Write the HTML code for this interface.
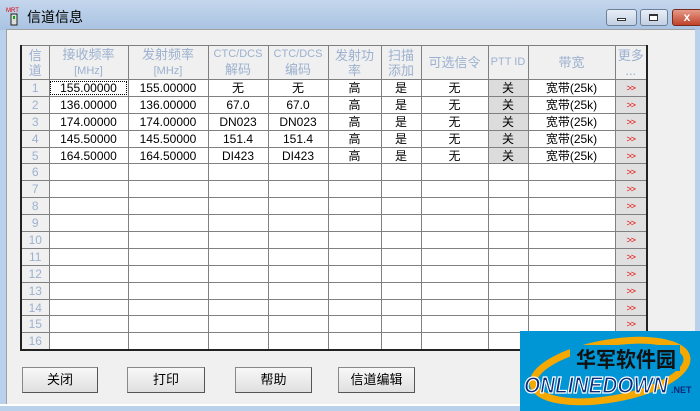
<!DOCTYPE html><html><head><meta charset="utf-8"><style>
*{margin:0;padding:0;box-sizing:border-box}
body{width:700px;height:411px;overflow:hidden;background:#b9d1ea;font-family:"Liberation Sans","Noto Sans CJK SC",sans-serif;position:relative}
.title{position:absolute;left:0;top:0;width:700px;height:30px;background:linear-gradient(#c4d6ec,#a9c3e2)}
.title span{position:absolute;left:27px;top:7px;font-size:14px;color:#000}
.panel{position:absolute;left:6px;top:29px;width:689px;height:375px;background:#f0f0f0;border-top:1px solid #a0a0a0;border-left:1px solid #a0a0a0}
.bottom{position:absolute;left:0;top:404px;width:700px;height:7px;background:#b9d1ea;border-top:2px solid #fff}
.wb{position:absolute;top:9px;height:17px;border:1px solid #6b7f99;border-radius:3px;background:linear-gradient(#e8eef7,#c2d0e3)}
table{position:absolute;left:20px;top:45px;border-collapse:collapse;table-layout:fixed;border:2px solid #222;border-top:1px solid #888;background:#fff}
td{border:1px solid #808080;height:16.9px;font-size:12px;text-align:center;line-height:14px;padding:0;white-space:nowrap;overflow:hidden}
tr.h td{height:34px;background:#f0f0f0;color:#9cb1cf;font-size:13px;line-height:15px}
td.n{background:#f0f0f0;color:#9cb1cf}
td.p{background:#dcdcdc}
td.m{background:#e0e0e0;color:#e00;font-size:9px;letter-spacing:-1px}
.btn{position:absolute;top:367px;height:26px;border:1px solid #888;border-right-color:#555;border-bottom-color:#555;background:linear-gradient(#f8f8f8,#e0e0e0);font-size:13px;text-align:center;line-height:24px}
.logo{position:absolute;left:520px;top:331px;width:180px;height:80px;background:#0096d6;overflow:hidden}
</style></head><body>
<div class="title"><svg style="position:absolute;left:6px;top:6px" width="16" height="20"><text x="0" y="6" font-size="6" fill="#d00" font-family="Liberation Sans">MRT</text><rect x="5" y="8" width="6" height="11" fill="#ddd" stroke="#222"/><rect x="7" y="10" width="2" height="3" fill="#0a0"/></svg><span>信道信息</span>
<div class="wb" style="left:606px;width:31px"><div style="position:absolute;left:10px;top:8px;width:9px;height:3px;border:1px solid #333;background:#fff"></div></div>
<div class="wb" style="left:640px;width:28px"><div style="position:absolute;left:8px;top:4px;width:9px;height:7px;border:1px solid #333;border-top-width:2px;background:#fff"></div></div>
<div class="wb" style="left:672px;width:30px;background:linear-gradient(#e79a8a,#c0432a);border-color:#7a2a1a;color:#fff;font-weight:bold;font-size:12px;text-align:center;line-height:15px">x</div>
</div>
<div class="panel"></div>
<table>
<colgroup><col style="width:28px"><col style="width:79px"><col style="width:80px"><col style="width:60px"><col style="width:60px"><col style="width:53px"><col style="width:40px"><col style="width:67px"><col style="width:40px"><col style="width:87px"><col style="width:32px"></colgroup>
<tr class="h"><td>信<br>道</td><td>接收频率<br><small style="font-size:11px">[MHz]</small></td><td>发射频率<br><small style="font-size:11px">[MHz]</small></td><td style="font-size:11px">CTC/DCS<br><span style="font-size:13px">解码</span></td><td style="font-size:11px">CTC/DCS<br><span style="font-size:13px">编码</span></td><td>发射功<br>率</td><td>扫描<br>添加</td><td>可选信令</td><td style="font-size:11px">PTT ID</td><td>带宽</td><td>更多<br>...</td></tr>
<tr><td class="n">1</td><td style="outline:1px dotted #000;outline-offset:-2px">155.00000</td><td>155.00000</td><td>无</td><td>无</td><td>高</td><td>是</td><td>无</td><td class="p">关</td><td>宽带(25k)</td><td class="m">&gt;&gt;</td></tr>
<tr><td class="n">2</td><td>136.00000</td><td>136.00000</td><td>67.0</td><td>67.0</td><td>高</td><td>是</td><td>无</td><td class="p">关</td><td>宽带(25k)</td><td class="m">&gt;&gt;</td></tr>
<tr><td class="n">3</td><td>174.00000</td><td>174.00000</td><td>DN023</td><td>DN023</td><td>高</td><td>是</td><td>无</td><td class="p">关</td><td>宽带(25k)</td><td class="m">&gt;&gt;</td></tr>
<tr><td class="n">4</td><td>145.50000</td><td>145.50000</td><td>151.4</td><td>151.4</td><td>高</td><td>是</td><td>无</td><td class="p">关</td><td>宽带(25k)</td><td class="m">&gt;&gt;</td></tr>
<tr><td class="n">5</td><td>164.50000</td><td>164.50000</td><td>DI423</td><td>DI423</td><td>高</td><td>是</td><td>无</td><td class="p">关</td><td>宽带(25k)</td><td class="m">&gt;&gt;</td></tr>
<tr><td class="n">6</td><td></td><td></td><td></td><td></td><td></td><td></td><td></td><td></td><td></td><td class="m">&gt;&gt;</td></tr>
<tr><td class="n">7</td><td></td><td></td><td></td><td></td><td></td><td></td><td></td><td></td><td></td><td class="m">&gt;&gt;</td></tr>
<tr><td class="n">8</td><td></td><td></td><td></td><td></td><td></td><td></td><td></td><td></td><td></td><td class="m">&gt;&gt;</td></tr>
<tr><td class="n">9</td><td></td><td></td><td></td><td></td><td></td><td></td><td></td><td></td><td></td><td class="m">&gt;&gt;</td></tr>
<tr><td class="n">10</td><td></td><td></td><td></td><td></td><td></td><td></td><td></td><td></td><td></td><td class="m">&gt;&gt;</td></tr>
<tr><td class="n">11</td><td></td><td></td><td></td><td></td><td></td><td></td><td></td><td></td><td></td><td class="m">&gt;&gt;</td></tr>
<tr><td class="n">12</td><td></td><td></td><td></td><td></td><td></td><td></td><td></td><td></td><td></td><td class="m">&gt;&gt;</td></tr>
<tr><td class="n">13</td><td></td><td></td><td></td><td></td><td></td><td></td><td></td><td></td><td></td><td class="m">&gt;&gt;</td></tr>
<tr><td class="n">14</td><td></td><td></td><td></td><td></td><td></td><td></td><td></td><td></td><td></td><td class="m">&gt;&gt;</td></tr>
<tr><td class="n">15</td><td></td><td></td><td></td><td></td><td></td><td></td><td></td><td></td><td></td><td class="m">&gt;&gt;</td></tr>
<tr><td class="n">16</td><td></td><td></td><td></td><td></td><td></td><td></td><td></td><td></td><td></td><td class="m">&gt;&gt;</td></tr>
</table>
<div class="btn" style="left:22px;width:76px">关闭</div>
<div class="btn" style="left:127px;width:78px">打印</div>
<div class="btn" style="left:235px;width:77px">帮助</div>
<div class="btn" style="left:338px;width:77px">信道编辑</div>
<div class="bottom"></div>
<div class="logo"><svg width="180" height="80"><ellipse cx="90" cy="40" rx="78" ry="28" fill="none" stroke="#f5a800" stroke-width="7" transform="rotate(-10 90 40)"/><rect x="50" y="14" width="110" height="26" fill="#0096d6"/><text x="56" y="36" font-size="21" font-weight="bold" fill="#111" font-family="Noto Sans CJK SC,sans-serif" textLength="100" lengthAdjust="spacingAndGlyphs">华军软件园</text><text x="4" y="62" font-size="23" font-weight="bold" font-style="italic" fill="#0a2a7a" stroke="#fff" stroke-width="1.2" font-family="Liberation Sans" textLength="144" lengthAdjust="spacingAndGlyphs">ONLINEDOWN</text><text x="151" y="62" font-size="9" font-weight="bold" fill="#0a2a7a" font-family="Liberation Sans">.NET</text></svg></div>
</body></html>
